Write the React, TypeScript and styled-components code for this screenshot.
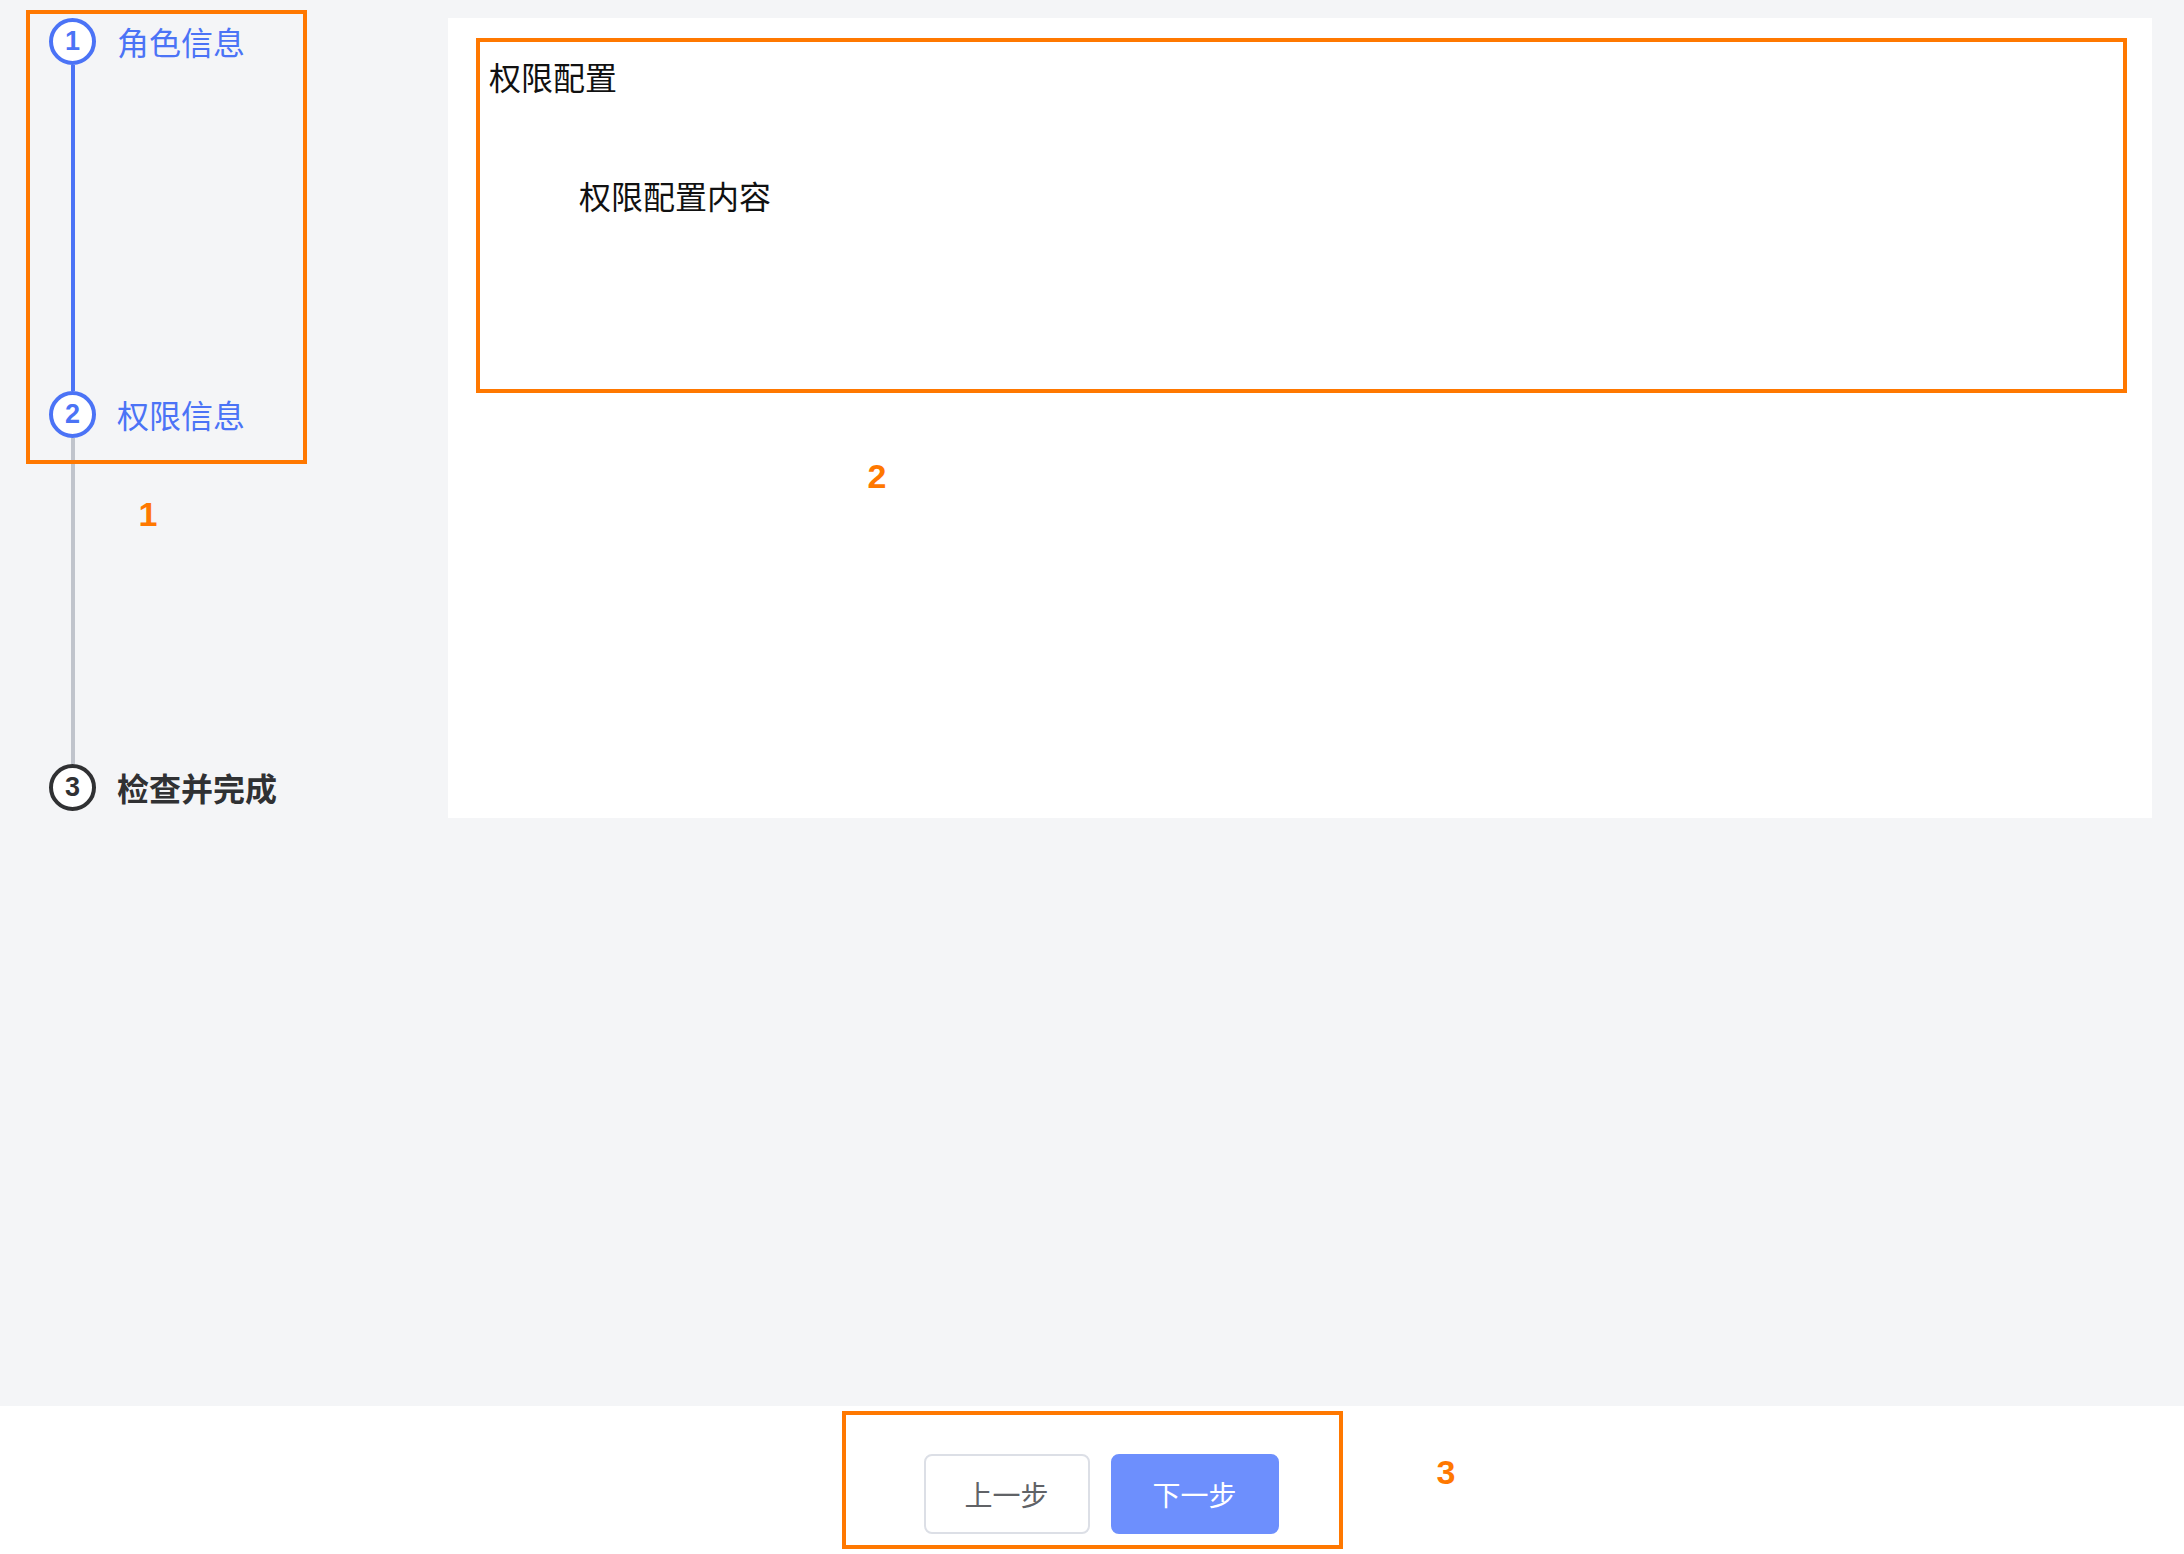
import React from "react";
import styled, { createGlobalStyle } from "styled-components";

const Global = createGlobalStyle`
  html, body { margin: 0; padding: 0; }
  body {
    font-family: "Noto Sans CJK SC", "Noto Sans", "Liberation Sans", sans-serif;
    background: #f4f5f7;
  }
  * { box-sizing: border-box; }
`;

const ORANGE = "#ff7800";
const BLUE = "#4b73f6";
const DARK = "#303133";

const Page = styled.div`
  width: 2184px;
  height: 1554px;
  display: flex;
  flex-direction: column;
  overflow: hidden;
`;

const Main = styled.div`
  flex: 1;
  display: flex;
  background: #f4f5f7;
  padding: 18px 32px 0 0;
`;

const Sidebar = styled.div`
  position: relative;
  width: 448px;
  flex-shrink: 0;
  padding-left: 49px;
`;

const Steps = styled.div`
  display: flex;
  flex-direction: column;
`;

const StepItem = styled.div<{ $last?: boolean }>`
  display: grid;
  grid-template-columns: 47px 1fr;
  column-gap: 21px;
  height: ${(p) => (p.$last ? "auto" : "373px")};
`;

const Rail = styled.div`
  display: flex;
  flex-direction: column;
  align-items: center;
`;

const Circle = styled.div<{ $color: string }>`
  width: 47px;
  height: 47px;
  flex-shrink: 0;
  border-radius: 50%;
  border: 4px solid ${(p) => p.$color};
  background: #fff;
  color: ${(p) => p.$color};
  display: flex;
  align-items: center;
  justify-content: center;
  font-family: "Liberation Sans", Arial, sans-serif;
  font-weight: 700;
  font-size: 27px;
  line-height: 1;
`;

const Line = styled.div<{ $color: string }>`
  flex: 1;
  width: 4px;
  background: ${(p) => p.$color};
`;

const StepTitle = styled.div<{ $color: string; $bold?: boolean }>`
  font-size: 32px;
  line-height: 47px;
  height: 47px;
  color: ${(p) => p.$color};
  font-weight: ${(p) => (p.$bold ? 600 : 400)};
  white-space: nowrap;
`;

const Annot = styled.div<{
  $left: number;
  $top: number;
  $w: number;
  $h: number;
}>`
  position: absolute;
  left: ${(p) => p.$left}px;
  top: ${(p) => p.$top}px;
  width: ${(p) => p.$w}px;
  height: ${(p) => p.$h}px;
  border: 4px solid ${ORANGE};
  pointer-events: none;
`;

const Label = styled.div<{ $left: number; $top: number }>`
  position: absolute;
  left: ${(p) => p.$left}px;
  top: ${(p) => p.$top}px;
  transform: translate(-50%, -50%);
  color: ${ORANGE};
  font-family: "Liberation Sans", Arial, sans-serif;
  font-weight: 700;
  font-size: 34px;
  line-height: 1;
`;

const Panel = styled.div`
  position: relative;
  flex: 1;
  height: 800px;
  background: #fff;
  padding: 20px 25px 0 28px;
`;

const ConfigBox = styled.div`
  height: 355px;
  border: 4px solid ${ORANGE};
  padding: 10px 9px;
  color: #111;
`;

const ConfigTitle = styled.div`
  font-size: 32px;
  line-height: 48px;
`;

const ConfigBody = styled.div`
  margin-top: 71px;
  padding-left: 90px;
  font-size: 32px;
  line-height: 48px;
`;

const Footer = styled.div`
  position: relative;
  height: 148px;
  background: #fff;
  display: flex;
  justify-content: center;
  padding-top: 5px;
`;

const ButtonBox = styled.div`
  width: 501px;
  height: 138px;
  border: 4px solid ${ORANGE};
  padding: 39px 0 0 78px;
  display: flex;
  gap: 21px;
  align-items: flex-start;
`;

const Button = styled.button<{ $primary?: boolean }>`
  width: ${(p) => (p.$primary ? 168 : 166)}px;
  height: 80px;
  border-radius: 8px;
  border: 2px solid ${(p) => (p.$primary ? "#6d8ffd" : "#dcdfe6")};
  background: ${(p) => (p.$primary ? "#6d8ffd" : "#fff")};
  color: ${(p) => (p.$primary ? "#fff" : "#606266")};
  font-family: "Noto Sans CJK SC", "Noto Sans", sans-serif;
  font-size: 28px;
  padding: 0;
  cursor: pointer;
`;

export default function App() {
  return (
    <Page>
      <Global />
      <Main>
        <Sidebar>
          <Steps>
            <StepItem>
              <Rail>
                <Circle $color={BLUE}>1</Circle>
                <Line $color={BLUE} />
              </Rail>
              <StepTitle $color={BLUE}>角色信息</StepTitle>
            </StepItem>
            <StepItem>
              <Rail>
                <Circle $color={BLUE}>2</Circle>
                <Line $color="#c0c4cc" />
              </Rail>
              <StepTitle $color={BLUE}>权限信息</StepTitle>
            </StepItem>
            <StepItem $last>
              <Rail>
                <Circle $color={DARK}>3</Circle>
              </Rail>
              <StepTitle $color={DARK} $bold>
                检查并完成
              </StepTitle>
            </StepItem>
          </Steps>
          <Annot $left={26} $top={-8} $w={281} $h={454} />
          <Label $left={148} $top={496}>1</Label>
        </Sidebar>
        <Panel>
          <ConfigBox>
            <ConfigTitle>权限配置</ConfigTitle>
            <ConfigBody>权限配置内容</ConfigBody>
          </ConfigBox>
          <Label $left={429} $top={458}>2</Label>
        </Panel>
      </Main>
      <Footer>
        <ButtonBox>
          <Button>上一步</Button>
          <Button $primary>下一步</Button>
        </ButtonBox>
        <Label $left={1446} $top={66}>3</Label>
      </Footer>
    </Page>
  );
}
